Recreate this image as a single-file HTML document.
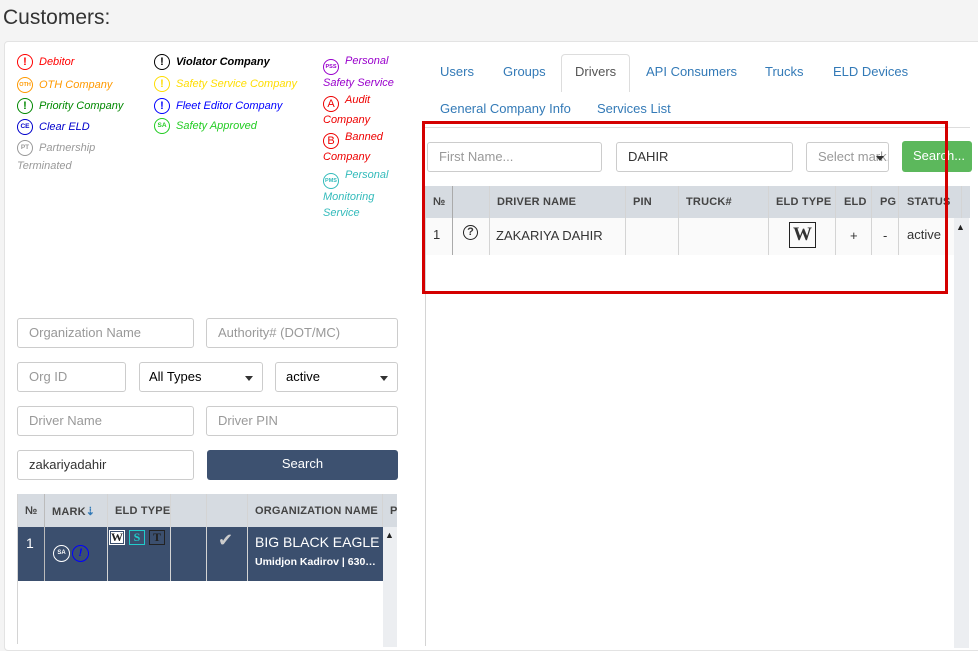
<!DOCTYPE html>
<html><head><meta charset="utf-8">
<style>
*{box-sizing:border-box;margin:0;padding:0}
body{width:978px;height:643px;overflow:hidden;background:#f4f4f4;font-family:"Liberation Sans",sans-serif;position:relative;font-size:13px;color:#333}
.a{position:absolute}
.card{left:4px;top:41px;width:980px;height:610px;background:#fff;border:1px solid #e3e3e3;border-radius:4px}
.lg{position:absolute;display:flex;align-items:center;font-style:italic;font-size:11px;line-height:16px;white-space:nowrap}
.lg2{position:absolute;font-style:italic;font-size:11px;line-height:17px;white-space:normal}
.ic{display:inline-block;flex:none;width:16px;height:16px;border:1.3px solid currentColor;border-radius:50%;text-align:center;font-size:11px;line-height:14px;font-weight:bold;font-style:normal;margin-right:6px;vertical-align:-4px}
.ic.s{font-size:5.5px;line-height:14px}
.inp{position:absolute;height:30px;border:1px solid #ccc;border-radius:3px;background:#fff;font-size:13px;color:#999;padding:0 11px;line-height:28px;white-space:nowrap;overflow:hidden}
.inp.v{color:#333}
.caret{position:absolute;right:9px;top:13px;border-left:4px solid transparent;border-right:4px solid transparent;border-top:5px solid #333}
.th{position:absolute;font-size:11px;font-weight:bold;color:#444;letter-spacing:.2px;white-space:nowrap}
.vl{position:absolute;width:1px;background:#d4d4d4}
.tab{position:absolute;color:#337ab7;font-size:13px;white-space:nowrap}
</style></head><body>
<div class="a" style="left:3px;top:6px;font-size:21px;color:#333">Customers:</div>
<div class="a card"></div>

<!-- legend -->
<div class="lg" style="left:17px;top:54px;color:#f00"><span class="ic">!</span>Debitor</div>
<div class="lg" style="left:17px;top:77px;color:#f90"><span class="ic s">OTH</span>OTH Company</div>
<div class="lg" style="left:17px;top:98px;color:#080"><span class="ic">!</span>Priority Company</div>
<div class="lg" style="left:17px;top:119px;color:#00c"><span class="ic s" style="font-size:6.5px">CE</span>Clear ELD</div>
<div class="lg" style="left:17px;top:140px;color:#999"><span class="ic s" style="font-size:6.5px">PT</span>Partnership</div>
<div class="lg" style="left:17px;top:158px;color:#999">Terminated</div>
<div class="lg" style="left:154px;top:54px;color:#000;font-weight:bold"><span class="ic">!</span>Violator Company</div>
<div class="lg" style="left:154px;top:76px;color:#fd0"><span class="ic">!</span>Safety Service Company</div>
<div class="lg" style="left:154px;top:98px;color:#00f"><span class="ic">!</span>Fleet Editor Company</div>
<div class="lg" style="left:154px;top:118px;color:#2c2"><span class="ic s" style="font-size:6.5px">SA</span>Safety Approved</div>
<div class="lg2" style="left:323px;top:53px;color:#90c;width:80px"><span class="ic s">PSS</span>Personal Safety Service</div>
<div class="lg2" style="left:323px;top:92px;color:#e00;width:70px"><span class="ic" style="font-weight:normal">A</span>Audit Company</div>
<div class="lg2" style="left:323px;top:129px;color:#e00;width:70px"><span class="ic" style="font-weight:normal">B</span>Banned Company</div>
<div class="lg2" style="left:323px;top:167px;color:#3bb;width:80px;line-height:16px"><span class="ic s">PMS</span>Personal Monitoring Service</div>

<!-- filters -->
<div class="inp" style="left:17px;top:318px;width:177px">Organization Name</div>
<div class="inp" style="left:206px;top:318px;width:192px">Authority# (DOT/MC)</div>
<div class="inp" style="left:17px;top:362px;width:109px">Org ID</div>
<div class="inp v" style="left:139px;top:362px;width:124px;padding-left:9px;color:#000">All Types<span class="caret"></span></div>
<div class="inp v" style="left:275px;top:362px;width:123px;padding-left:10px;color:#000">active<span class="caret"></span></div>
<div class="inp" style="left:17px;top:406px;width:177px">Driver Name</div>
<div class="inp" style="left:206px;top:406px;width:192px">Driver PIN</div>
<div class="inp v" style="left:17px;top:450px;width:177px">zakariyadahir</div>
<div class="a" style="left:207px;top:450px;width:191px;height:30px;background:#3d5170;border-radius:3px;color:#fff;text-align:center;line-height:27px;font-size:13px">Search</div>

<!-- left table -->
<div class="a" style="left:17px;top:494px;width:380px;height:33px;background:#d6dbe1"></div>
<div class="th" style="left:25px;top:505px">№</div>
<div class="th" style="left:52px;top:505px">MARK<span style="color:#337ab7">⇣</span></div>
<div class="th" style="left:115px;top:505px">ELD TYPE</div>
<div class="th" style="left:255px;top:505px">ORGANIZATION NAME</div>
<div class="th" style="left:390px;top:505px">P</div>
<div class="a" style="left:17px;top:527px;width:366px;height:54px;background:#3b4f6e"></div>
<div class="a" style="left:383px;top:527px;width:14px;height:120px;background:#eceef1"></div>
<div class="a" style="left:385px;top:530px;font-size:9px;color:#222">▲</div>
<div class="vl" style="left:17px;top:494px;height:150px"></div>
<div class="vl" style="left:44px;top:494px;height:87px;background:#bbb"></div>
<div class="vl" style="left:107px;top:494px;height:87px"></div>
<div class="vl" style="left:170px;top:494px;height:87px"></div>
<div class="vl" style="left:206px;top:494px;height:87px"></div>
<div class="vl" style="left:247px;top:494px;height:87px"></div>
<div class="vl" style="left:382px;top:494px;height:33px"></div>
<div class="a" style="left:26px;top:535px;color:#fff;font-size:14px">1</div>
<div class="a" style="left:53px;top:545px;width:17px;height:17px;border:1px solid #fff;border-radius:50%;color:#fff;font-size:6px;text-align:center;line-height:15px;font-weight:bold">SA</div>
<div class="a" style="left:72px;top:545px;width:17px;height:17px;border:1.3px solid #00f;border-radius:50%;color:#00f;font-size:11px;text-align:center;line-height:14px;font-style:italic;font-weight:bold">!</div>
<div class="a" style="left:109px;top:530px;width:16px;height:15px;border:1px solid #fff;background:#fff;color:#222;font:bold 12px 'Liberation Serif',serif;text-align:center;line-height:13px;box-shadow:inset 0 0 0 1px #3b4f6e"><span>W</span></div>
<div class="a" style="left:129px;top:530px;width:16px;height:15px;border:1px solid #2cc;color:#2cc;font:bold 12px 'Liberation Serif',serif;text-align:center;line-height:13px">S</div>
<div class="a" style="left:149px;top:530px;width:16px;height:15px;border:1px solid #222;color:#222;font:bold 12px 'Liberation Serif',serif;text-align:center;line-height:13px">T</div>
<div class="a" style="left:218px;top:530px;color:#ccc;font-size:18px">✔</div>
<div class="a" style="left:255px;top:534px;color:#fff;font-size:14px;white-space:nowrap;width:127px;overflow:hidden">BIG BLACK EAGLE LLC</div>
<div class="a" style="left:255px;top:556px;color:#fff;font-size:10.5px;font-weight:bold">Umidjon Kadirov | 630…</div>

<!-- tabs -->
<div class="a" style="left:561px;top:54px;width:69px;height:38px;background:#fff;border:1px solid #ddd;border-bottom:none;border-radius:4px 4px 0 0"></div>
<div class="tab" style="left:440px;top:64px">Users</div>
<div class="tab" style="left:503px;top:64px">Groups</div>
<div class="tab" style="left:575px;top:64px;color:#555">Drivers</div>
<div class="tab" style="left:646px;top:64px">API Consumers</div>
<div class="tab" style="left:765px;top:64px">Trucks</div>
<div class="tab" style="left:833px;top:64px">ELD Devices</div>
<div class="tab" style="left:440px;top:101px">General Company Info</div>
<div class="tab" style="left:597px;top:101px">Services List</div>
<div class="a" style="left:425px;top:127px;width:545px;height:1px;background:#ddd"></div>

<!-- right panel -->
<div class="inp" style="left:427px;top:142px;width:175px">First Name...</div>
<div class="inp v" style="left:616px;top:142px;width:177px">DAHIR</div>
<div class="inp" style="left:806px;top:142px;width:83px;padding-left:11px">Select mark...<span class="caret" style="right:4px"></span></div>
<div class="a" style="left:902px;top:141px;width:70px;height:31px;background:#5cb85c;border-radius:3px;color:#fff;font-size:13px;line-height:29px;padding-left:11px;white-space:nowrap">Search...</div>

<div class="a" style="left:426px;top:186px;width:544px;height:32px;background:#d6dbe1"></div>
<div class="th" style="left:433px;top:196px">№</div>
<div class="th" style="left:497px;top:196px">DRIVER NAME</div>
<div class="th" style="left:633px;top:196px">PIN</div>
<div class="th" style="left:686px;top:196px">TRUCK#</div>
<div class="th" style="left:776px;top:196px">ELD TYPE</div>
<div class="th" style="left:844px;top:196px">ELD</div>
<div class="th" style="left:880px;top:196px">PG</div>
<div class="th" style="left:907px;top:196px">STATUS</div>
<div class="a" style="left:426px;top:218px;width:528px;height:37px;background:#fafafa"></div>
<div class="vl" style="left:452px;top:186px;height:69px;background:#aaa"></div>
<div class="vl" style="left:489px;top:186px;height:69px"></div>
<div class="vl" style="left:625px;top:186px;height:69px"></div>
<div class="vl" style="left:678px;top:186px;height:69px"></div>
<div class="vl" style="left:768px;top:186px;height:69px"></div>
<div class="vl" style="left:835px;top:186px;height:69px"></div>
<div class="vl" style="left:871px;top:186px;height:69px"></div>
<div class="vl" style="left:898px;top:186px;height:69px"></div>
<div class="vl" style="left:961px;top:186px;height:32px"></div>
<div class="vl" style="left:425px;top:186px;height:460px"></div>
<div class="a" style="left:954px;top:218px;width:15px;height:430px;background:#eceef1"></div>
<div class="a" style="left:956px;top:222px;font-size:9px;color:#222">▲</div>
<div class="a" style="left:433px;top:227px;font-size:13px">1</div>
<div class="a" style="left:463px;top:225px;width:15px;height:15px;border:1.5px solid #222;border-radius:50%;text-align:center;font-size:11px;font-weight:bold;line-height:12px">?</div>
<div class="a" style="left:496px;top:228px;font-size:13px">ZAKARIYA DAHIR</div>
<div class="a" style="left:789px;top:222px;width:27px;height:26px;border:1px solid #222;text-align:center;font:bold 19px 'Liberation Serif',serif;line-height:24px">W</div>
<div class="a" style="left:850px;top:228px">+</div>
<div class="a" style="left:883px;top:228px">-</div>
<div class="a" style="left:907px;top:227px">active</div>

<div class="a" style="left:422px;top:121px;width:526px;height:173px;border:3px solid #d40000"></div>
</body></html>
